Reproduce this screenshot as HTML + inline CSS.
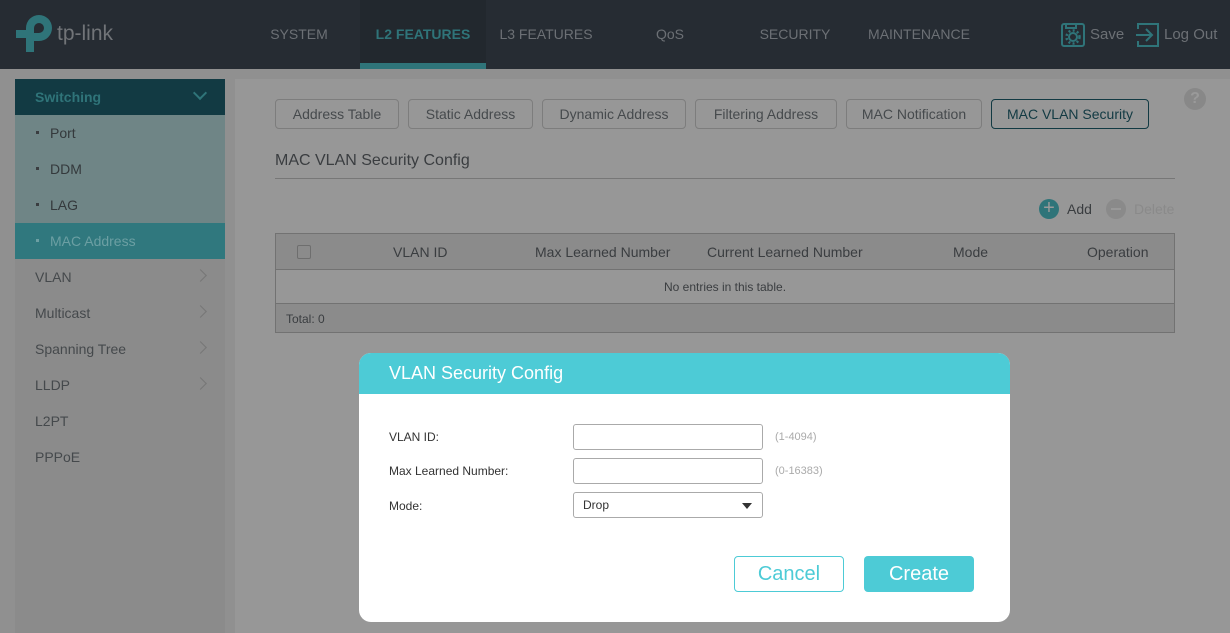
<!DOCTYPE html>
<html><head><meta charset="utf-8"><style>
*{margin:0;padding:0;box-sizing:border-box}
body{width:1230px;height:633px;overflow:hidden;background:#909090;font-family:"Liberation Sans",sans-serif;position:relative;color:#3a3d40}
.a{position:absolute}
.top{left:0;top:0;width:1230px;height:69px;background:#262c33}
.nav{top:0;height:69px;line-height:69px;font-size:14px;color:#6c7075;text-align:center}
.side{left:15px;top:79px;width:210px;height:554px;background:#8b8b8b}
.si{position:absolute;left:0;width:210px;height:36px;line-height:36px;font-size:14px;color:#45494c;padding-left:20px}
.sub{background:#6f8586;color:#34393c;padding-left:35px}
.chev{position:absolute;right:20px;top:12px;width:9px;height:9px;border-right:1.5px solid #777;border-top:1.5px solid #777;transform:rotate(45deg)}
.panel{left:235px;top:79px;width:995px;height:554px;background:#979797}
.tab{top:99px;height:30px;line-height:28px;border:1px solid #7d7d7d;border-radius:4px;font-size:14px;color:#464a4d;text-align:center}
.modal{left:359px;top:353px;width:651px;height:269px;background:#fff;border-radius:12px;overflow:hidden}
.mh{height:41px;background:#4dcbd6;color:#fff;font-size:18px;line-height:41px;padding-left:30px}
.lb{font-size:12px;color:#333;left:30px}
.inp{left:214px;width:190px;height:26px;border:1px solid #aaa;border-radius:3px}
.hint{left:416px;font-size:11px;color:#aaa}
</style></head><body>
<div class="a top"></div>
<svg class="a" style="left:14px;top:14px" width="40" height="40" viewBox="0 0 40 40"><path d="M12 38V24H2v-8h10v-2a13 13 0 1 1 13 13h-5v-8h5a5 5 0 1 0-5-5v24z" fill="#2f7479"/></svg>
<div class="a" style="left:57px;top:22px;font-size:21px;color:#717478">tp-link</div>
<div class="a nav" style="left:250px;width:98px">SYSTEM</div>
<div class="a" style="left:360px;top:0;width:126px;height:69px;background:#22282e"></div>
<div class="a" style="left:360px;top:63px;width:126px;height:6px;background:#2f7479"></div>
<div class="a nav" style="left:360px;width:126px;color:#2f7479;font-weight:bold">L2 FEATURES</div>
<div class="a nav" style="left:490px;width:112px">L3 FEATURES</div>
<div class="a nav" style="left:620px;width:100px">QoS</div>
<div class="a nav" style="left:745px;width:100px">SECURITY</div>
<div class="a nav" style="left:860px;width:118px">MAINTENANCE</div>
<svg class="a" style="left:1060px;top:22px" width="26" height="26" viewBox="0 0 26 26" fill="none" stroke="#2f7479" stroke-width="2"><rect x="2" y="2" width="22" height="22" rx="2"/><path d="M6 2v4h10V2"/><circle cx="13" cy="15" r="4"/><circle cx="13" cy="15" r="6.5" stroke-dasharray="2 2.3" stroke-width="2.5"/></svg>
<div class="a" style="left:1090px;top:26px;font-size:15px;color:#6c7075">Save</div>
<svg class="a" style="left:1136px;top:22px" width="24" height="26" viewBox="0 0 24 26" fill="none" stroke="#2f7479" stroke-width="2"><path d="M2 7V2h20v22H2v-5"/><path d="M0 13h15M10 7l6 6-6 6"/></svg>
<div class="a" style="left:1164px;top:26px;font-size:15px;color:#6c7075">Log Out</div>

<div class="a side"></div>
<div class="si" style="top:79px;left:15px;background:#123a43;color:#2f7479;font-weight:bold;font-size:14px">Switching<span style="position:absolute;right:20px;top:9px;width:10px;height:10px;border-right:2px solid #2f7479;border-bottom:2px solid #2f7479;transform:rotate(45deg)"></span></div>
<div class="si sub" style="top:115px;left:15px">Port</div>
<div class="si sub" style="top:151px;left:15px">DDM</div>
<div class="si sub" style="top:187px;left:15px">LAG</div>
<div class="si sub" style="top:223px;left:15px;background:#30787e;color:#6c9fa3">MAC Address</div>
<div class="a" style="left:36px;top:131px;width:3px;height:3px;background:#3a3d40;box-shadow:0 36px #3a3d40,0 72px #3a3d40,0 108px #6c9fa3"></div>
<div class="si" style="top:259px;left:15px">VLAN<span class="chev"></span></div>
<div class="si" style="top:295px;left:15px">Multicast<span class="chev"></span></div>
<div class="si" style="top:331px;left:15px">Spanning Tree<span class="chev"></span></div>
<div class="si" style="top:367px;left:15px">LLDP<span class="chev"></span></div>
<div class="si" style="top:403px;left:15px">L2PT</div>
<div class="si" style="top:439px;left:15px">PPPoE</div>

<div class="a panel"></div>
<div class="a tab" style="left:275px;width:124px">Address Table</div>
<div class="a tab" style="left:408px;width:125px">Static Address</div>
<div class="a tab" style="left:542px;width:144px">Dynamic Address</div>
<div class="a tab" style="left:695px;width:142px">Filtering Address</div>
<div class="a tab" style="left:846px;width:136px">MAC Notification</div>
<div class="a tab" style="left:991px;width:158px;border-color:#123a43;color:#123a43">MAC VLAN Security</div>
<div class="a" style="left:1184px;top:88px;width:22px;height:22px;border-radius:50%;background:#888;color:#9a9a9a;font-size:16px;text-align:center;line-height:22px;font-weight:bold">?</div>
<div class="a" style="left:275px;top:152px;font-size:16px;color:#3a3d40">MAC VLAN Security Config</div>
<div class="a" style="left:275px;top:178px;width:900px;height:1px;background:#777"></div>
<div class="a" style="left:1039px;top:199px;width:20px;height:20px;border-radius:50%;background:#2f7479;color:#9a9a9a;font-size:20px;line-height:19px;text-align:center">+</div>
<div class="a" style="left:1067px;top:201px;font-size:14px;color:#3a3d40">Add</div>
<div class="a" style="left:1106px;top:199px;width:20px;height:20px;border-radius:50%;background:#8a8a8a"><div style="margin:9px 5px;height:2px;background:#999"></div></div>
<div class="a" style="left:1134px;top:201px;font-size:14px;color:#8a8a8a">Delete</div>
<div class="a" style="left:275px;top:233px;width:900px;height:100px;border:1px solid #727272;background:#979797"></div>
<div class="a" style="left:276px;top:234px;width:898px;height:36px;background:#8b8b8b;border-bottom:1px solid #727272"></div>
<div class="a" style="left:276px;top:303px;width:898px;height:29px;background:#8b8b8b;border-top:1px solid #727272"></div>
<div class="a" style="left:297px;top:245px;width:14px;height:14px;border:1px solid #6e6e6e;border-radius:2px"></div>
<div class="a" style="top:244px;font-size:14px;color:#3a3d40;left:393px">VLAN ID</div>
<div class="a" style="top:244px;font-size:14px;color:#3a3d40;left:535px">Max Learned Number</div>
<div class="a" style="top:244px;font-size:14px;color:#3a3d40;left:707px">Current Learned Number</div>
<div class="a" style="top:244px;font-size:14px;color:#3a3d40;left:953px">Mode</div>
<div class="a" style="top:244px;font-size:14px;color:#3a3d40;left:1087px">Operation</div>
<div class="a" style="top:280px;font-size:12px;color:#3a3d40;left:276px;width:898px;text-align:center">No entries in this table.</div>
<div class="a" style="top:312px;font-size:12px;color:#3a3d40;left:286px">Total: 0</div>

<div class="a modal">
<div class="mh">VLAN Security Config</div>
<div class="a lb" style="top:77px">VLAN ID:</div>
<div class="a inp" style="top:71px"></div>
<div class="a hint" style="top:78px">(1-4094)</div>
<div class="a lb" style="top:111px">Max Learned Number:</div>
<div class="a inp" style="top:105px"></div>
<div class="a hint" style="top:112px">(0-16383)</div>
<div class="a lb" style="top:146px">Mode:</div>
<div class="a inp" style="top:139px;font-size:12px;color:#333;padding:5px 9px">Drop<span style="position:absolute;right:10px;top:10px;border-left:5px solid transparent;border-right:5px solid transparent;border-top:6px solid #333"></span></div>
<div class="a" style="left:375px;top:203px;width:110px;height:36px;border:1px solid #4dcbd6;border-radius:4px;color:#4dcbd6;font-size:20px;text-align:center;line-height:34px">Cancel</div>
<div class="a" style="left:505px;top:203px;width:110px;height:36px;background:#4dcbd6;border-radius:4px;color:#fff;font-size:20px;text-align:center;line-height:36px">Create</div>
</div>
</body></html>
